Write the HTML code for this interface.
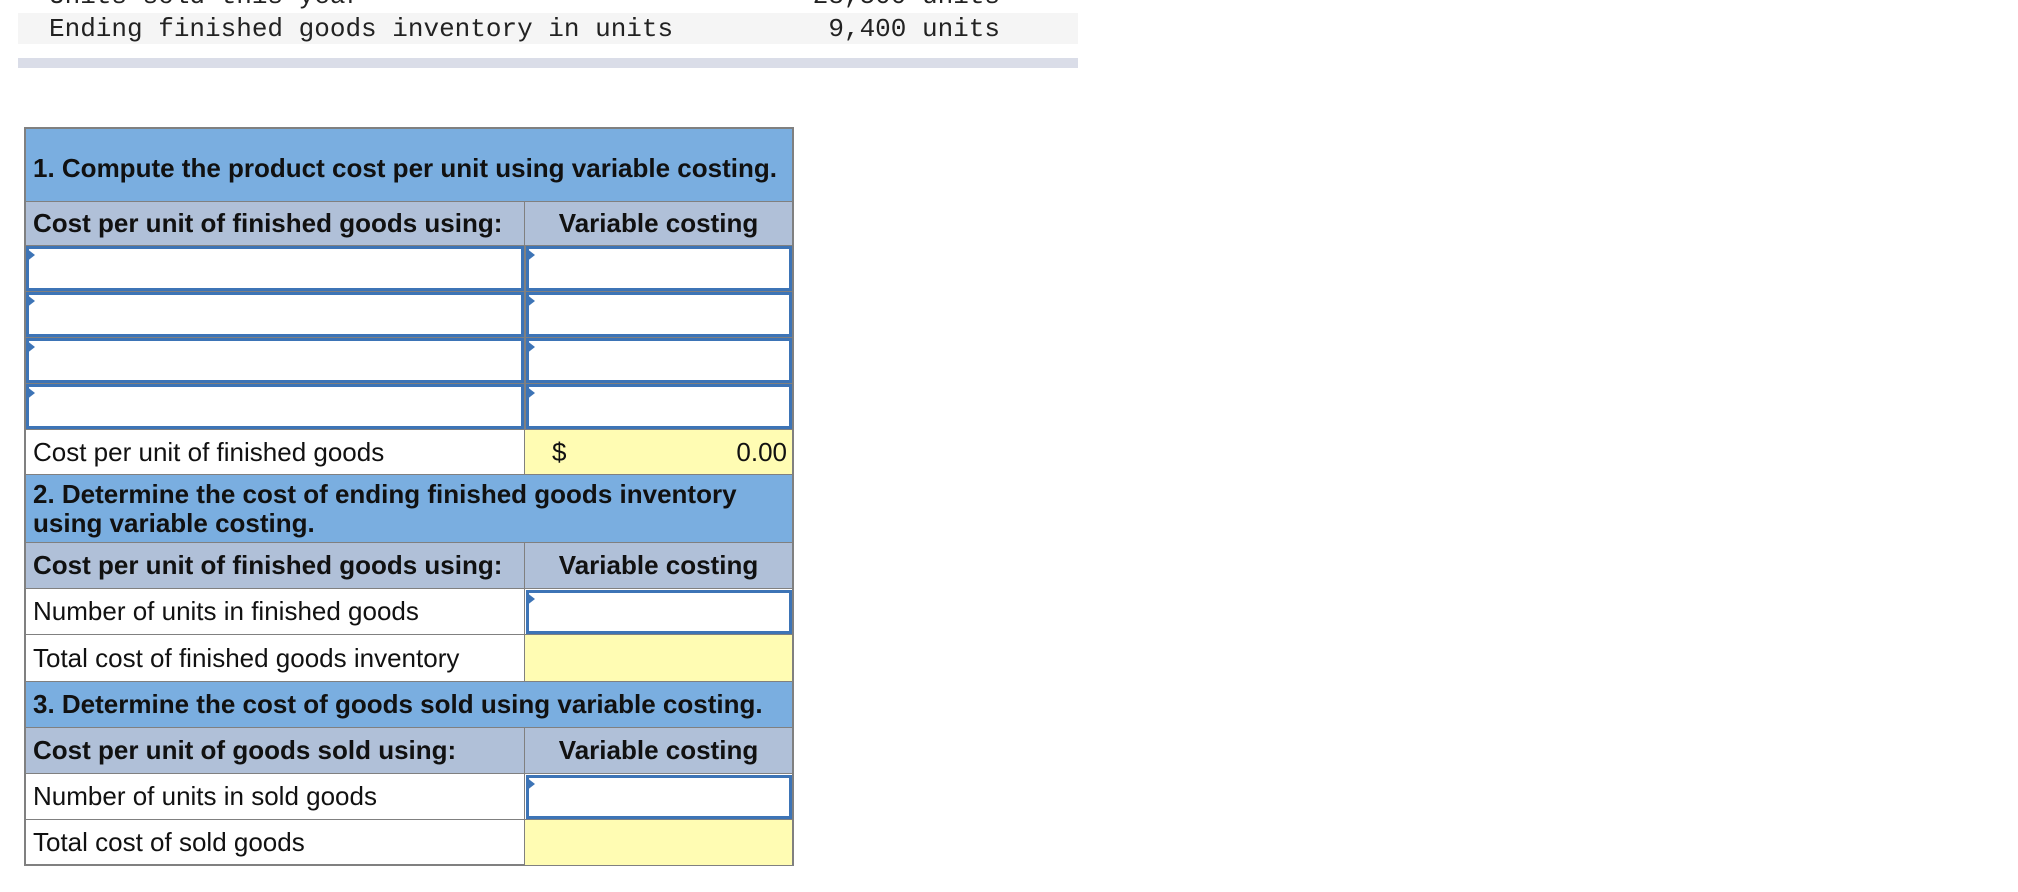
<!DOCTYPE html>
<html><head><meta charset="utf-8"><style>
body{margin:0;width:2018px;height:892px;background:#fff;position:relative;overflow:hidden;font-family:"Liberation Sans",Arial,sans-serif;}
.a{position:absolute;box-sizing:border-box;}
.mono{font-family:"Liberation Mono",monospace;font-size:26px;color:#222;white-space:pre;}
.c{position:absolute;box-sizing:border-box;border:1px solid #808080;font-size:26px;color:#111;padding-left:7px;display:flex;align-items:center;white-space:nowrap;}
.blue{background:#7aaee0;font-weight:bold;}
.hd{background:#b0c0d8;font-weight:bold;}
.yl{background:#fffcb3;}
.in{position:absolute;box-sizing:border-box;border:3px solid #3d74b6;background:#fff;}
.in:before{content:"";position:absolute;left:-3px;top:-1px;border-left:9px solid #3d74b6;border-top:7px solid transparent;border-bottom:7px solid transparent;}
</style></head><body>
<div class="a" style="left:18px;top:13px;width:1060px;height:31px;background:#f5f5f5"></div>
<div class="a mono" style="left:49px;top:-19px">Units sold this year</div>
<div class="a mono" style="left:800px;top:-19px;width:200px;text-align:right">28,500 units</div>
<div class="a" style="left:18px;top:13px;width:1060px;height:31px;background:#f5f5f5"></div>
<div class="a mono" style="left:49px;top:14px">Ending finished goods inventory in units</div>
<div class="a mono" style="left:800px;top:14px;width:200px;text-align:right">9,400 units</div>
<div class="a" style="left:18px;top:58px;width:1060px;height:10px;background:#dadde8"></div>

<div class="a" style="left:24px;top:127px;width:770px;height:739px;border:2px solid #808080"></div>
<div class="c blue" style="left:25px;top:128px;width:768px;height:74px;padding-top:6px">1. Compute the product cost per unit using variable costing.</div>
<div class="c hd" style="left:25px;top:201px;width:500px;height:45px">Cost per unit of finished goods using:</div>
<div class="c hd" style="left:524px;top:201px;width:269px;height:45px;justify-content:center;padding-left:0">Variable costing</div>

<div class="c" style="left:25px;top:245px;width:500px;height:185px;background:#808080"></div>
<div class="c" style="left:524px;top:245px;width:269px;height:185px;background:#808080"></div>
<div class="in" style="left:26px;top:246px;width:498px;height:45px"></div>
<div class="in" style="left:526px;top:246px;width:266px;height:45px"></div>
<div class="in" style="left:26px;top:292px;width:498px;height:45px"></div>
<div class="in" style="left:526px;top:292px;width:266px;height:45px"></div>
<div class="in" style="left:26px;top:338px;width:498px;height:45px"></div>
<div class="in" style="left:526px;top:338px;width:266px;height:45px"></div>
<div class="in" style="left:26px;top:384px;width:498px;height:45px"></div>
<div class="in" style="left:526px;top:384px;width:266px;height:45px"></div>

<div class="c" style="left:25px;top:429px;width:500px;height:46px;background:#fff">Cost per unit of finished goods</div>
<div class="c yl" style="left:524px;top:429px;width:269px;height:46px;padding-left:27px;justify-content:space-between;padding-right:5px"><span>$</span><span>0.00</span></div>

<div class="c blue" style="left:25px;top:474px;width:768px;height:69px;line-height:29px;white-space:normal">2. Determine the cost of ending finished goods inventory<br>using variable costing.</div>
<div class="c hd" style="left:25px;top:542px;width:500px;height:47px">Cost per unit of finished goods using:</div>
<div class="c hd" style="left:524px;top:542px;width:269px;height:47px;justify-content:center;padding-left:0">Variable costing</div>
<div class="c" style="left:25px;top:588px;width:500px;height:47px">Number of units in finished goods</div>
<div class="c" style="left:524px;top:588px;width:269px;height:47px"></div>
<div class="in" style="left:526px;top:590px;width:266px;height:44px"></div>
<div class="c" style="left:25px;top:634px;width:500px;height:48px">Total cost of finished goods inventory</div>
<div class="c yl" style="left:524px;top:634px;width:269px;height:48px"></div>

<div class="c blue" style="left:25px;top:681px;width:768px;height:47px">3. Determine the cost of goods sold using variable costing.</div>
<div class="c hd" style="left:25px;top:727px;width:500px;height:47px">Cost per unit of goods sold using:</div>
<div class="c hd" style="left:524px;top:727px;width:269px;height:47px;justify-content:center;padding-left:0">Variable costing</div>
<div class="c" style="left:25px;top:773px;width:500px;height:47px">Number of units in sold goods</div>
<div class="c" style="left:524px;top:773px;width:269px;height:47px"></div>
<div class="in" style="left:526px;top:775px;width:266px;height:44px"></div>
<div class="c" style="left:25px;top:819px;width:500px;height:47px">Total cost of sold goods</div>
<div class="c yl" style="left:524px;top:819px;width:269px;height:47px"></div>
</body></html>
